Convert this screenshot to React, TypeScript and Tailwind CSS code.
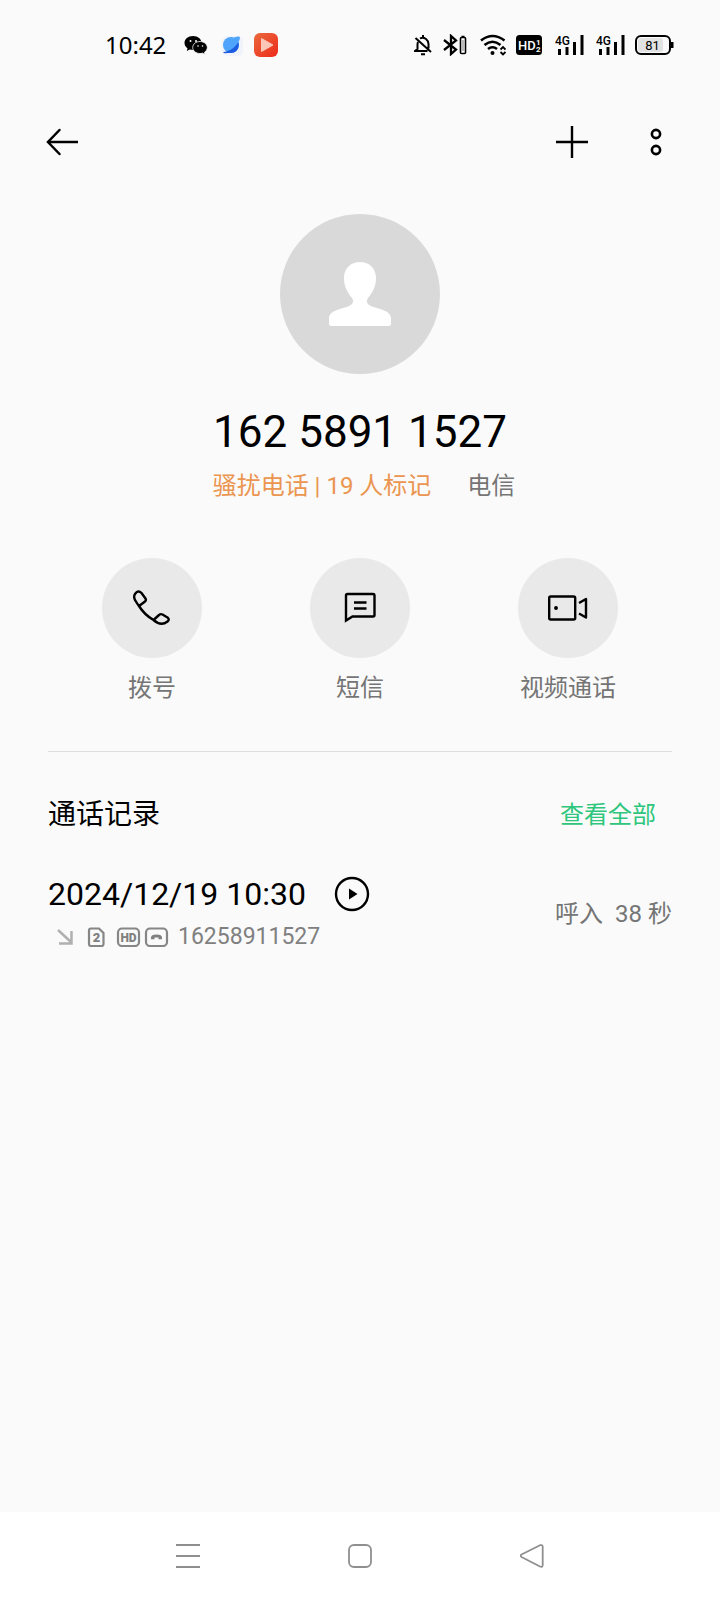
import type { ReactNode } from "react";

const FONT = "font-[Roboto,'Noto_Sans_CJK_SC',sans-serif]";

export default function App() {
  return (
    <div className={`min-h-screen flex flex-col bg-[#fafafa] text-black ${FONT}`}>
      <StatusBar />

      <header className="h-[104px] flex items-center justify-between pl-[46px] pr-12">
        <button aria-label="返回">
          <svg className="w-8 h-8" viewBox="0 0 32 32" fill="none" stroke="currentColor" strokeWidth="2.5">
            <path strokeLinecap="round" d="M13.5 4L2 16l11.5 12" />
            <path d="M2 16h30" />
          </svg>
        </button>
        <div className="flex gap-[52px]">
          <button aria-label="添加">
            <svg className="w-8 h-8" viewBox="0 0 32 32" fill="none" stroke="currentColor" strokeWidth="2.4">
              <path d="M0 16h32M16 0v32" />
            </svg>
          </button>
          <button aria-label="更多">
            <svg className="w-8 h-8" viewBox="0 0 32 32" fill="none" stroke="currentColor" strokeWidth="2.6">
              <circle cx="16" cy="8" r="4.1" />
              <circle cx="16" cy="24" r="4.1" />
            </svg>
          </button>
        </div>
      </header>

      <main className="grow px-12 pt-5">
        <div className="flex flex-col items-center">
          <div className="w-40 h-40 rounded-full bg-[#d9d9d9] flex items-center justify-center">
            <svg className="w-16 h-16" viewBox="0 0 64 64" fill="white">
              <path d="M32 0C41.5 0 48 6.5 48 16C48 24 45 30 40 36C37.5 40 39.5 42.5 44 44.5C52 47.5 63 48.5 63 56.5V62Q63 64 61 64H3Q1 64 1 62V56.5C1 48.5 12 47.5 20 44.5C24.5 42.5 26.5 40 24 36C19 30 16 24 16 16C16 6.5 22.5 0 32 0Z" />
            </svg>
          </div>
          <h1 className="mt-[30px] text-[44px] leading-[56px]">162 5891 1527</h1>
          <p className="mt-2 pl-2 flex gap-9 text-2xl leading-9">
            <span className="text-[#eb9550]">骚扰电话 | 19 人标记</span>
            <span className="text-[#757575]">电信</span>
          </p>
        </div>

        <div className="mt-[54px] grid grid-cols-3">
          <Action label="拨号">
            <path d="M3 6Q6 1.5 9.5 5L13.5 10.5Q14.5 12.5 13 13.5L7 18C2.5 12 1 9 3 6ZM7 18C11 24.5 15.5 28.5 21.5 32M21.5 32L27 27Q28.5 25.5 30.5 26.5L35.5 29.5Q38 31.5 35.5 33.5C31 37 26.5 36.5 21.5 32Z" />
          </Action>
          <Action label="短信">
            <path strokeLinejoin="miter" d="M6 32.5V7.5Q6 6 7.5 6H33Q34.5 6 34.5 7.5V27Q34.5 28.5 33 28.5H12.5L6 32.5Z" />
            <path d="M14 14.5h12.5M14 20.5h12.5" />
          </Action>
          <Action label="视频通话">
            <rect x="1.2" y="8.5" width="26" height="23" rx="1.5" />
            <circle cx="8" cy="20" r="1.2" fill="currentColor" strokeWidth="1.5" />
            <path d="M31 15L38 11V29.5L31 25.5" />
          </Action>
        </div>

        <hr className="mt-[45px] border-[#dedede]" />

        <section>
          <div className="mt-[43px] pr-4 flex items-center justify-between">
            <h2 className="text-[28px] leading-10">通话记录</h2>
            <a href="#all" className="text-2xl leading-9 text-[#2dc67c]">
              查看全部
            </a>
          </div>

          <ul className="mt-[39px]">
            <li className="flex items-center justify-between">
              <div>
                <div className="flex items-center gap-7 text-[32px] leading-10">
                  <span>2024/12/19 10:30</span>
                  <button aria-label="播放录音">
                    <svg className="w-9 h-9" viewBox="0 0 36 36" fill="none" stroke="currentColor" strokeWidth="2.4">
                      <circle cx="18" cy="18" r="16" />
                      <path d="M15 12.5V23.5L23.5 18Z" fill="currentColor" stroke="none" />
                    </svg>
                  </button>
                </div>
                <div className="mt-[7px] pl-2 flex items-center text-[23px] leading-8 text-[#808080]">
                  <CallBadges />
                  <span className="ml-[9px]">16258911527</span>
                </div>
              </div>
              <p className="flex gap-3 text-2xl text-[#757575]">
                <span>呼入</span>
                <span>38 秒</span>
              </p>
            </li>
          </ul>
        </section>
      </main>

      <nav className="h-[88px] bg-white flex items-center justify-center text-[#8f8f8f]">
        <NavButton label="最近任务">
          <path d="M0 1h24M0 12h24M0 23h24" />
        </NavButton>
        <NavButton label="主屏幕">
          <rect x="1" y="1" width="22" height="22" rx="5" />
        </NavButton>
        <NavButton label="返回上一级">
          <path strokeLinejoin="round" d="M1.5 10.5L20 1.2Q22.7.5 22.7 3V21Q22.7 23.5 20 22.5L1.5 13Q0 11.8 1.5 10.5Z" />
        </NavButton>
      </nav>
    </div>
  );
}

function Action({ label, children }: { label: string; children: ReactNode }) {
  return (
    <button className="flex flex-col items-center">
      <span className="w-[100px] h-[100px] rounded-full bg-[#e9e9e9] flex items-center justify-center">
        <svg
          className="w-10 h-10"
          viewBox="0 0 40 40"
          fill="none"
          stroke="currentColor"
          strokeWidth="2.4"
          strokeLinejoin="round"
        >
          {children}
        </svg>
      </span>
      <span className="mt-3 text-2xl leading-9 text-[#757575]">{label}</span>
    </button>
  );
}

function NavButton({ label, children }: { label: string; children: ReactNode }) {
  return (
    <button aria-label={label} className="w-[172px] h-full flex items-center justify-center">
      <svg className="w-6 h-6" viewBox="0 0 24 24" fill="none" stroke="currentColor" strokeWidth="1.8">
        {children}
      </svg>
    </button>
  );
}

// incoming arrow, SIM slot, HD and VoLTE marks in front of the number
function CallBadges() {
  return (
    <svg className="w-[113px] h-5" viewBox="0 0 113 20" fill="none" stroke="#868686" strokeWidth="2.2">
      <path stroke="#b0b0b0" strokeWidth="2.5" d="M2 3l13.5 12.5M15.5 4v12.5H3" />
      <path d="M34 1.5h9l4.5 4.5V17q0 2-2 2H35q-2 0-2-2V3.5q0-2 2-2z" />
      <rect x="62" y="1.5" width="21" height="17.5" rx="4" />
      <rect x="90" y="1.5" width="21" height="17.5" rx="4" />
      <path fill="#808080" stroke="none" d="M95 10.5Q95 7.5 100.500 7.5Q106 7.5 106 10.5V12.2H102.5V10.5H98.5V12.2H95Z" />
      <g fill="#808080" stroke="none" fontWeight="900" textAnchor="middle">
        <text x="40.5" y="15" fontSize="13">2</text>
        <text x="72.5" y="14.5" fontSize="12">HD</text>
      </g>
    </svg>
  );
}

function Signal() {
  return (
    <svg className="w-[30px] h-6" viewBox="0 0 30 24">
      <text x="1" y="12" fontSize="12" fontWeight="500">4G</text>
      <path d="M5.5 22v-6M13 22v-8M20.5 22V9M28 22V2" stroke="black" strokeWidth="3" />
    </svg>
  );
}

function StatusBar() {
  return (
    <div className="h-[90px] flex items-center justify-between pl-[105px] pr-[45px]">
      <div className="flex items-center">
        <span className="text-2xl leading-8 font-['Noto_Sans',sans-serif]">10:42</span>
        <svg className="ml-[18px] w-6 h-5" viewBox="0 0 24 20">
          <path d="M9 1C4 1 .5 4 .5 8c0 2.300 1.200 4 3 5.200L2.800 16l3-1.500c1 .3 2 .5 3.200.5 5 0 8.500-3 8.500-7S14 1 9 1z" />
          <path
            d="M16 6.500c-4 0-7.300 2.600-7.300 6s3.300 6 7.300 6c.9 0 1.800-.1 2.500-.4l2.600 1.400-.7-2.200c1.800-1.100 2.900-2.800 2.900-4.800 0-3.400-3.300-6-7.300-6z"
            stroke="#fafafa"
            strokeWidth="0.8"
          />
          <g fill="#fafafa">
            <circle cx="6.5" cy="6" r="1" />
            <circle cx="12" cy="6" r="1" />
            <circle cx="14" cy="11" r=".8" />
            <circle cx="18.5" cy="11" r=".8" />
          </g>
        </svg>
        <svg className="ml-3 w-6 h-6" viewBox="0 0 24 24">
          <rect x="2" y="3" width="21" height="20" rx="5" fill="#f0f3fa" />
          <circle cx="11" cy="12" r="8" fill="#4ea5fb" />
          <path d="M14 4.5Q19.500 2.5 20 4.5Q20 7 17 11Z" fill="#4ea5fb" />
          <path d="M18.500 9C20 16 15.5 20.3 10.5 20C8 19.8 4 21 3 19C10 18.5 15 14.5 18.500 9Z" fill="#1d5be0" />
        </svg>
        <svg className="ml-[10px] w-6 h-6" viewBox="0 0 24 24">
          <defs>
            <linearGradient id="video" x1="0" y1="0" x2="1" y2="1">
              <stop stopColor="#ea6a3c" />
              <stop offset="1" stopColor="#ee2a1c" />
            </linearGradient>
          </defs>
          <rect width="24" height="24" rx="6" fill="url(#video)" />
          <path d="M7.5 5.5L19 12L7.5 18.5Z" fill="#fcc7b8" stroke="#fcc7b8" strokeLinejoin="round" />
        </svg>
      </div>

      <div className="flex items-center">
        <svg className="w-[18px] h-[22px]" viewBox="0 0 18 22" fill="none" stroke="black" strokeWidth="2">
          <path d="M9 1v3M6 4.5Q9 2.800 12 5Q14.5 7 14.5 10v4.5M4 8Q3.5 9 3.5 11v4L1 17H13.5M1.5 4L17 18M7 20.300h4" />
        </svg>
        <svg className="ml-[11px] w-6 h-[22px]" viewBox="0 0 24 22" fill="none" stroke="black" strokeWidth="2.3">
          <path d="M1 6L13 15.500L8 20V2L13 6.500L1 16" />
          <rect x="17.5" y="3.5" width="5" height="16" rx="1" fill="white" strokeWidth="1.6" />
          <path d="M20 6v11" strokeWidth="1" stroke="#777777" />
          <path d="M18.5 2.5h3" strokeWidth="1.5" />
        </svg>
        <svg className="ml-[13px] w-[26px] h-[22px]" viewBox="0 0 26 22" fill="none" stroke="black" strokeWidth="2.6">
          <path d="M1 6.5Q12.5-2.5 24.5 6.5M4.5 11Q12.5 4.5 20.5 11M8 15Q12.5 11.5 17 15" />
          <circle cx="12.5" cy="19" r="2" fill="black" stroke="none" />
          <path d="M20.500 15.500l2.500-2.500 2.500 2.500M20.500 18l2.500 2.500 2.500-2.500" strokeWidth="1.8" />
        </svg>
        <svg className="ml-[10px] w-[26px] h-5" viewBox="0 0 26 20">
          <rect width="26" height="20" rx="3.5" />
          <g fill="white">
            <text x="2" y="15" fontSize="13" fontWeight="500">HD</text>
            <text x="20" y="9.5" fontSize="8" fontWeight="700">1</text>
            <text x="20" y="17" fontSize="8" fontWeight="700">2</text>
          </g>
        </svg>
        <div className="ml-3 flex gap-[11px]">
          <Signal />
          <Signal />
        </div>
        <svg className="ml-[10px] w-10 h-5" viewBox="0 0 40 20">
          <rect x="3" y="3" width="25" height="14" rx="3" fill="#e2e2e2" />
          <rect x="1" y="1" width="34" height="18" rx="5" fill="none" stroke="black" strokeWidth="2" />
          <rect x="36" y="7" width="2.5" height="6" />
          <text x="17.5" y="14.5" fontSize="13" textAnchor="middle">81</text>
        </svg>
      </div>
    </div>
  );
}
